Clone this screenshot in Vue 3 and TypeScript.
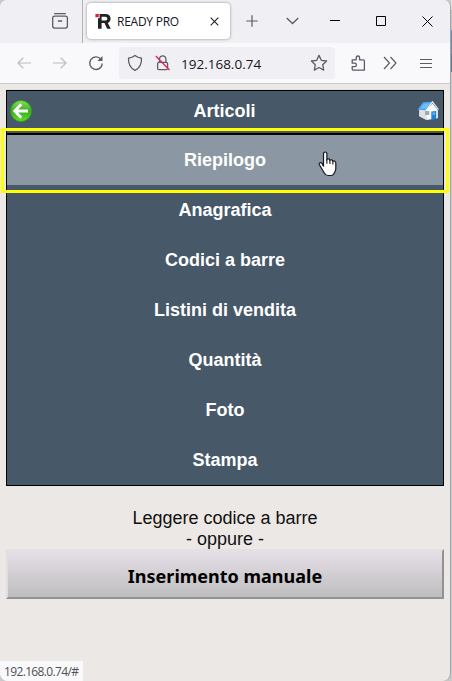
<script setup lang="ts">
import { ref } from 'vue'

const items: string[] = ['Riepilogo', 'Anagrafica', 'Codici a barre', 'Listini di vendita', 'Quantità', 'Foto', 'Stampa']
const hovered = ref(0)
</script>

<template>
  <div class="desktop">
    <div class="window">
      <header class="tabstrip">
        <div class="view">
          <svg width="18" height="18" viewBox="0 0 18 18" fill="none" stroke="#5b5b66" stroke-width="1.3" stroke-linecap="round">
            <path d="M3.6 1.6h10.8" /><rect x="1.7" y="4.2" width="14.7" height="11.9" rx="2" /><path d="M7.4 9h3.3" />
          </svg>
        </div>
        <div class="tab">
          <svg class="logo" width="17" height="17" viewBox="0 0 17 17">
            <path fill="#222" d="M4.600 4.200V1h5.700c3.500 0 5.300 1.700 5.300 4.600 0 2.100-1 3.600-2.800 4.300l3 5.800h-3.700L9.500 10H6.600v5.700H3V5.200h1.600zm2-.4v3.700h3.500c1.400 0 2.200-.6 2.200-1.800s-.8-1.900-2.200-1.900z" />
            <path fill="#ed1631" d="M.4 1h3.400v3.200H.4z" />
          </svg>
          <span class="tab-title">READY PRO</span>
          <svg class="tab-close" width="9" height="9" viewBox="0 0 9 9" stroke="#222" stroke-width="1.100"><path d="M.7.7l7.600 7.600M8.300.7L.7 8.300" /></svg>
        </div>
        <svg class="plus" width="12" height="12" viewBox="0 0 12 12" stroke="#5b5b66" stroke-width="1.2"><path d="M6 .3v11.4M.3 6h11.4" /></svg>
        <svg class="down" width="13" height="8" viewBox="0 0 13 8" fill="none" stroke="#5b5b66" stroke-width="1.3"><path d="M.7 1l5.800 5.500L12.300 1" /></svg>
        <svg class="minimize" width="10" height="10" viewBox="0 0 10 10"><path fill="#000" d="M0 4h10v1H0z" /></svg>
        <svg class="maximize" width="10" height="10" viewBox="0 0 10 10"><path fill="none" stroke="#000" d="M.5.5h9v9h-9z" /></svg>
        <svg class="close" width="11" height="11" viewBox="0 0 11 11" stroke="#000"><path d="M.5.5l10 10M10.5.5l-10 10" /></svg>
      </header>

      <nav class="toolbar">
        <svg class="back" width="14" height="12" viewBox="0 0 14 12" fill="none" stroke="#bcbcc1" stroke-width="1.2"><path d="M14 6H.9M6.3.8L1 6l5.3 5.2" /></svg>
        <svg class="forward" width="14" height="12" viewBox="0 0 14 12" fill="none" stroke="#bcbcc1" stroke-width="1.2"><path d="M0 6h13.1M7.7.8L13 6l-5.3 5.2" /></svg>
        <svg class="reload" width="16" height="16" viewBox="0 0 16 16" fill="none" stroke="#5b5b66" stroke-width="1.4"><path d="M12.9 4.2A6.3 6.3 0 1 0 14.3 8.5" /><path d="M14.5 1v5H9.4z" fill="#5b5b66" stroke="none" /></svg>
        <div class="address">
          <svg class="shield" width="16" height="18" viewBox="0 0 16 18" fill="none" stroke="#5b5b66" stroke-width="1.3" stroke-linejoin="round"><path d="M8 1.4c1.8 1.5 3.8 2.3 6.5 2.7.3 5.3-1.4 9.7-6.5 12.3C2.9 13.8 1.2 9.4 1.5 4.1 4.2 3.7 6.2 2.9 8 1.4z" /></svg>
          <svg class="lock" width="16" height="18" viewBox="0 0 16 18" fill="none" stroke="#5b5b66" stroke-width="1.3"><rect x="2.6" y="8.4" width="10" height="7.3" rx="1.4" /><path d="M4.5 8V5a3.2 3.2 0 0 1 6.4 0v3" /><path stroke="#e22850" stroke-width="1.4" d="M.8 2l13.7 14" /></svg>
          <span class="url">192.168.0.74</span>
          <svg class="star" width="18" height="18" viewBox="0 0 18 18" fill="none" stroke="#5b5b66" stroke-width="1.3" stroke-linejoin="round"><path d="M9 1.4l2.3 4.9 5.3.7-3.9 3.7 1 5.4L9 13.5l-4.7 2.6 1-5.4L1.4 7l5.3-.7z" /></svg>
        </div>
        <svg class="puzzle" width="15" height="17" viewBox="0 0 15 17" fill="none" stroke="#5b5b66" stroke-width="1.3" stroke-linejoin="round"><path d="M1.2 4.8h4V2.7a1.7 1.7 0 0 1 3.4 0v2.1h3.6c.7 0 1.2.5 1.2 1.2v9.2H2.400c-.7 0-1.200-.5-1.200-1.200v-2.400h2.500a1.700 1.700 0 0 0 0-3.400H1.200z" /></svg>
        <svg class="more" width="14" height="14" viewBox="0 0 14 14" fill="none" stroke="#5b5b66" stroke-width="1.2"><path d="M1 1l5.5 6L1 13M7.500 1L13 7l-5.500 6" /></svg>
        <svg class="menu" width="12" height="11" viewBox="0 0 12 11" stroke="#5b5b66" stroke-width="1.1"><path d="M0 1.500h12M0 5.500h12M0 9.500h12" /></svg>
      </nav>

      <main class="page">
        <section class="panel">
          <div class="panel-head">
            <svg width="22" height="22" viewBox="0 0 22 22">
              <defs><linearGradient id="green" x1="0" y1="0" x2="0" y2="1"><stop offset="0" stop-color="#8ee15d" /><stop offset=".5" stop-color="#35ae1c" /><stop offset="1" stop-color="#63dc2b" /></linearGradient></defs>
              <circle cx="11" cy="11" r="10.5" fill="url(#green)" stroke="#2ca116" stroke-width=".8" />
              <path d="M18 11H5M11.2 4.2L4.7 11l6.500 6.800" fill="none" stroke="#fff" stroke-width="2.9" />
            </svg>
            <h1>Articoli</h1>
            <svg width="22" height="20" viewBox="0 0 22 20">
              <path d="M2.300 7.500L9.500 8v11L2.300 15.300z" fill="#d9dee2" />
              <path d="M8.500 9.500l7-7L20.800 9v8.300L9.500 19z" fill="#fafafa" />
              <path d="M2.300 9h7.300v9.900l-7.300-3.600z" fill="#dce1e5" />
              <path d="M.5 8.700L6 1.300 15.500.8 9 9.300z" fill="#4ba4f4" />
              <path d="M3 7.500l4-5 6.500-.3-4.700 5.600z" fill="#72bcfb" />
              <path d="M9 9.300L15.500.8l6 7.700" fill="none" stroke="#eef4fa" stroke-width="1.100" />
              <path d="M14.300 10.500l4.900-.6v8l-4.900.8z" fill="#1784dd" /><path d="M15.500 11.600l2.500-.4v2.500l-2.500.3z" fill="#63b5f4" />
              <path d="M8 10h4.300v4H8z" fill="#a3aaae" />
            </svg>
          </div>
          <ul class="items">
            <li v-for="(item, i) in items" :key="item" :class="{ active: hovered === i }" @mouseenter="hovered = i">{{ item }}</li>
          </ul>
        </section>
        <p class="hint">Leggere codice a barre<br />- oppure -</p>
        <button class="manual" type="button">Inserimento manuale</button>
      </main>

      <div class="highlight"></div>
      <svg class="hand" width="20" height="26" viewBox="0 0 20 26">
        <path d="M5.500 15.500V3c0-2.700 3.400-2.700 3.400 0v5.500c.8-1.100 2.800-.7 3 .7 1-.9 2.700-.3 2.900 1 1.200-.7 3 .1 3 1.800v5.700c0 2-1 3.200-1.600 4.500-.7 1.600-1.600 2.300-3.400 2.300h-2.600c-1.900 0-3.100-1-3.900-2.500L1.400 13.800c-.9-2.100 1.200-3 2.600-1.400z" fill="#fff" stroke="#16161f" stroke-width="1.2" />
        <path d="M8.900 8.500v4.300M11.900 9.200v3.900M14.900 10.200v3.300" fill="none" stroke="#16161f" stroke-width="1.1" />
      </svg>
      <div class="status">192.168.0.74/#</div>
    </div>
    <div class="behind"></div>
  </div>
</template>

<style>
body { margin: 0; overflow: hidden; }
</style>

<style scoped>
.desktop { display: flex; width: 452px; height: 681px; background: #c8c8c8; }
.behind { flex: none; width: 1px; background: linear-gradient(#e6e6e6 0 10px, #c4c4c4 10px 30px, #6d87b5 30px 54px, #5a7ba0 54px 72px, #cbcbcb 72px); }
.window { box-sizing: border-box; position: relative; flex: none; width: 451px; height: 681px; overflow: hidden; border-right: 1px solid #a4a4a6; border-radius: 7px 7px 8px 8px; background: #ece8e5; font-family: "Open Sans", sans-serif; }
svg { display: block; flex: none; }

.tabstrip { display: flex; height: 43px; background: #f0f0f4; align-items: flex-start; }
.view { box-sizing: border-box; flex: none; width: 83px; height: 43px; border-right: 1px solid #b0b0b6; padding: 12px 0 0 51px; }
.tab { display: flex; flex: none; box-sizing: border-box; width: 143px; height: 36px; margin: 3px 0 0 4px; padding: 0 11px 0 8px; align-items: center; background: #fff; border-radius: 4px; box-shadow: 0 0 3px #85858c; }
.tab-title { width: 64px; margin-left: 5px; font-size: 12px; letter-spacing: -.25px; color: #15141a; white-space: nowrap; }
.tab-close { margin-left: auto; }
.plus { margin: 15px 0 0 16px; }
.down { margin: 17px 0 0 28px; }
.minimize { margin: 16px 0 0 31px; }
.maximize { margin: 16px 0 0 36px; }
.close { margin: 16px 0 0 36px; }

.toolbar { display: flex; box-sizing: border-box; height: 41px; align-items: center; background: #f9f9fb; border-bottom: 1px solid #cccccf; }
.back { margin-left: 17px; }
.forward { margin-left: 22px; }
.reload { margin-left: 21px; }
.address { display: flex; align-items: center; box-sizing: border-box; width: 216px; height: 32px; margin-left: 15px; padding: 0 7px 0 8px; border-radius: 4px; background: #f0f0f4; }
.lock { margin-left: 12px; }
.url { margin: 1px 0 0 10px; font-size: 13.5px; color: #15141a; letter-spacing: 0; }
.star { margin-left: auto; }
.puzzle { margin-left: 16px; }
.more { margin-left: 17px; }
.menu { margin-left: 23px; }

.page { padding: 6px 6px 0; font-family: "Liberation Sans", Arial, sans-serif; font-size: 18px; }
.panel { border: 1px solid #000; background: #475869; color: #fff; font-weight: bold; box-shadow: 0 -1px #dfe3d9; }
.panel-head { display: flex; box-sizing: border-box; height: 44px; padding: 0 4px 3px 3px; align-items: center; justify-content: space-between; border-bottom: 2px solid #000; }
h1 { margin: 0; padding-top: 2px; font-size: 18px; line-height: 21px; }
.items { list-style: none; margin: 0; padding: 0; }
.items li { height: 50px; line-height: 50px; text-align: center; }
.items .active { background: #8b98a3; }
.hint { height: 41px; margin: 22px 0 0; line-height: 21px; text-align: center; color: #111; }
.manual { display: block; box-sizing: border-box; width: 438px; height: 50px; padding: 3px 0 0; border: 2px solid; border-color: #e3e0e2 #929292 #929292 #e0dedf; background: linear-gradient(#e6dfe8, #bebebe); color: #000; font: bold 18px "Noto Sans", sans-serif; }

.highlight { position: absolute; left: 1px; top: 128px; box-sizing: border-box; width: 448px; height: 65px; border: 3px solid #ff0; pointer-events: none; }
.hand { position: absolute; left: 318px; top: 151px; pointer-events: none; }
.status { position: absolute; left: 0; bottom: 0; box-sizing: border-box; width: 83px; height: 20px; padding-left: 4px; font-size: 12px; line-height: 21px; letter-spacing: -.65px; word-spacing: 0; color: #505054; background: #f9f9fb; white-space: nowrap; }
</style>
